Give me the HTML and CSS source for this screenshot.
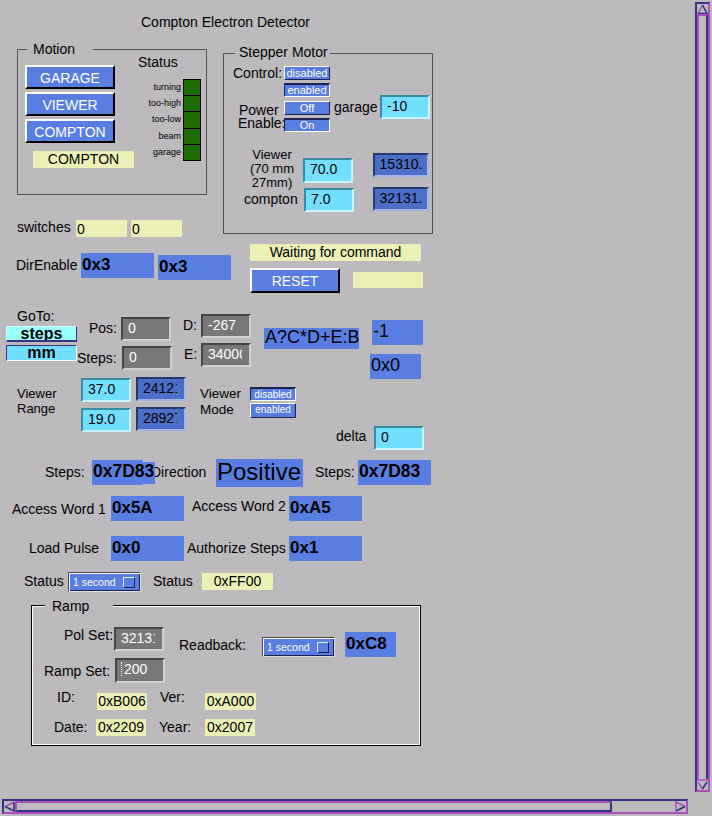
FILE: index.html
```html
<!DOCTYPE html>
<html>
<head>
<meta charset="utf-8">
<title>Compton Electron Detector</title>
<link rel="stylesheet" href="styles.css">
</head>
<body>
<div class="screen">

<div class="lbl at-title">Compton Electron Detector</div>

<!-- Motion -->
<div class="frame at-motion"></div>
<div class="legend at-motion-lg">Motion</div>
<div class="btn at-garage">GARAGE</div>
<div class="btn at-viewer">VIEWER</div>
<div class="btn at-compton">COMPTON</div>
<div class="ind at-pos-ind">COMPTON</div>
<div class="lbl at-status">Status</div>
<div class="ledlbl at-ledlbl">
	<div>turning</div>
	<div>too-high</div>
	<div>too-low</div>
	<div>beam</div>
	<div>garage</div>
</div>
<div class="leds at-leds">
	<div></div><div></div><div></div><div></div><div></div>
</div>

<!-- Stepper Motor -->
<div class="frame at-stepper"></div>
<div class="legend at-stepper-lg">Stepper Motor</div>
<div class="lbl at-control">Control:</div>
<div class="choice up at-ctl-dis">disabled</div>
<div class="choice down at-ctl-ena">enabled</div>
<div class="lbl two at-power"><span class="indent">Power</span><br>Enable:</div>
<div class="choice up at-pwr-off">Off</div>
<div class="choice down at-pwr-on">On</div>
<div class="lbl at-garage-lbl">garage</div>
<div class="entry cyan at-garage-set">-10</div>
<div class="small at-viewer-lbl">Viewer<br>(70 mm<br>27mm)</div>
<div class="entry cyan at-viewer-set">70.0</div>
<div class="lbl at-compton-lbl">compton</div>
<div class="entry cyan at-compton-set">7.0</div>
<div class="entry dark at-viewer-rb">15310.</div>
<div class="entry dark at-compton-rb">32131.</div>

<!-- switches / direction enable -->
<div class="lbl at-switches">switches</div>
<div class="ind left at-sw1">0</div>
<div class="ind left at-sw2">0</div>
<div class="lbl at-direnable">DirEnable</div>
<div class="hex at-dir1">0x3</div>
<div class="hex at-dir2">0x3</div>
<div class="ind at-waiting">Waiting for command</div>
<div class="btn at-reset">RESET</div>
<div class="ind at-msg"></div>

<!-- GoTo -->
<div class="lbl at-goto">GoTo:</div>
<div class="unit up-unit at-steps-btn">steps</div>
<div class="unit down-unit at-mm-btn">mm</div>
<div class="lbl at-pos-lbl">Pos:</div>
<div class="entry gray at-pos">0</div>
<div class="lbl at-steps-lbl">Steps:</div>
<div class="entry gray at-steps">0</div>
<div class="lbl at-d-lbl">D:</div>
<div class="entry gray at-d">-267</div>
<div class="lbl at-e-lbl">E:</div>
<div class="entry gray clip at-e"><span>34000</span></div>
<div class="val at-calc">A?C*D+E:B</div>
<div class="val at-minus1">-1</div>
<div class="val at-zero">0x0</div>

<!-- viewer range -->
<div class="small range at-range-lbl">Viewer<br>Range</div>
<div class="entry cyan at-range-hi">37.0</div>
<div class="entry dark clip at-range-hi-rb"><span>24121</span></div>
<div class="entry cyan at-range-lo">19.0</div>
<div class="entry dark clip at-range-lo-rb"><span>28927</span></div>
<div class="mode at-mode-lbl">Viewer<br>Mode</div>
<div class="choice down tiny at-mode-dis">disabled</div>
<div class="choice up tiny at-mode-ena">enabled</div>
<div class="lbl at-delta-lbl">delta</div>
<div class="entry cyan at-delta">0</div>

<!-- steps / direction -->
<div class="lbl at-steps1-lbl">Steps:</div>
<div class="lbl at-direction">Direction</div>
<div class="hex at-steps1-ext"></div>
<div class="hex wide at-steps1">0x7D83</div>
<div class="val big at-positive">Positive</div>
<div class="lbl at-steps2-lbl">Steps:</div>
<div class="hex wide at-steps2">0x7D83</div>

<div class="lbl at-aw1-lbl">Access Word 1</div>
<div class="hex at-aw1">0x5A</div>
<div class="lbl at-aw2-lbl">Access Word 2</div>
<div class="hex at-aw2">0xA5</div>

<div class="lbl at-load-lbl">Load Pulse</div>
<div class="hex at-load">0x0</div>
<div class="lbl at-auth-lbl">Authorize Steps</div>
<div class="hex at-auth">0x1</div>

<div class="lbl at-status1-lbl">Status</div>
<div class="menu at-status-menu">1 second<i></i></div>
<div class="lbl at-status2-lbl">Status</div>
<div class="ind at-status-val">0xFF00</div>

<!-- Ramp -->
<div class="frame etched at-ramp"></div>
<div class="legend at-ramp-lg">Ramp</div>
<div class="lbl at-polset-lbl">Pol Set:</div>
<div class="entry gray clip at-polset"><span>32131</span></div>
<div class="lbl at-rampset-lbl">Ramp Set:</div>
<div class="entry gray at-rampset"><span class="caret"></span>200</div>
<div class="lbl at-readback-lbl">Readback:</div>
<div class="menu at-readback-menu">1 second<i></i></div>
<div class="hex at-readback">0xC8</div>
<div class="lbl at-id-lbl">ID:</div>
<div class="ind at-id">0xB006</div>
<div class="lbl at-ver-lbl">Ver:</div>
<div class="ind at-ver">0xA000</div>
<div class="lbl at-date-lbl">Date:</div>
<div class="ind at-date">0x2209</div>
<div class="lbl at-year-lbl">Year:</div>
<div class="ind at-year">0x2007</div>

<!-- window scrollbars -->
<div class="vscroll">
	<div class="arrow"><svg width="11" height="10" viewBox="0 0 11 10"><path d="M1 9.5 L5.5 1" stroke="#ae4ebc" stroke-width="1.6" fill="none"/><path d="M5.5 1 L10 9.5 H1" stroke="#343386" stroke-width="1.6" fill="none"/></svg></div>
	<div class="thumb"></div>
	<div class="arrow"><svg width="11" height="11" viewBox="0 0 11 11"><path d="M0 1 H11 M1 3 L5.5 10" stroke="#ae4ebc" stroke-width="1.6" fill="none"/><path d="M5.5 10 L10 3" stroke="#343386" stroke-width="1.6" fill="none"/></svg></div>
</div>
<div class="hscroll">
	<div class="arrow"><svg width="11" height="11" viewBox="0 0 11 11"><path d="M10 1 L1 5.5" stroke="#ae4ebc" stroke-width="1.6" fill="none"/><path d="M1 5.5 L10 10 V1" stroke="#343386" stroke-width="1.6" fill="none"/></svg></div>
	<div class="thumb"></div>
	<div class="trough"></div>
	<div class="arrow"><svg width="11" height="11" viewBox="0 0 11 11"><path d="M1 10 V1 L10 5.5" stroke="#ae4ebc" stroke-width="1.6" fill="none"/><path d="M10 5.5 L1 10" stroke="#343386" stroke-width="1.6" fill="none"/></svg></div>
</div>

</div>
</body>
</html>
```

FILE: styles.css
```css
body {
	margin: 0;
	background-color: #bcbabd;
	font-family: "Liberation Sans", Arial, Helvetica, sans-serif;
	font-size: 14px;
	color: #000;
}

.screen {
	position: relative;
	width: 712px;
	height: 816px;
	overflow: hidden;
}

/* every widget sits at its own spot on the display canvas */
.screen > div {
	position: absolute;
	box-sizing: border-box;
	white-space: nowrap;
}

/* text */
.lbl { line-height: 14px; }
.lbl.two { line-height: 13px; }
.indent { padding-left: 1px; }
.small { font-size: 13px; line-height: 14px; }
.small.range { line-height: 15px; }
.mode { font-size: 13.5px; line-height: 16px; }
.legend {
	background-color: #bcbabd;
	line-height: 14px;
}

/* frames */
.frame { border: 1px solid #4f4f4f; }
.frame.etched {
	border-color: #000;
	box-shadow: inset 0 0 0 1px #fff;
}

/* yellow text indicators */
.ind {
	background-color: #ebf1b5;
	line-height: 17px;
	text-align: center;
	overflow: hidden;
}
.ind.left {
	text-align: left;
	padding-left: 1px;
	line-height: 18px;
}

/* blue text updates */
.hex {
	background-color: #597ee1;
	font-size: 17px;
	font-weight: bold;
	line-height: 23px;
	padding-left: 1px;
}
.hex.wide { font-size: 17.5px; }
.val {
	background-color: #597ee1;
	font-size: 18px;
	line-height: 22px;
	padding-left: 1px;
}
.val.big {
	font-size: 24px;
	line-height: 26px;
}

/* entries */
.entry {
	border: 2px solid;
	line-height: 19px;
	padding-left: 5px;
	overflow: hidden;
}
.cyan {
	background-color: #73dfff;
	border-color: #3a8aa1 #c8f6ff #c8f6ff #3a8aa1;
}
.gray {
	background-color: #787878;
	color: #fff;
	border-color: #454545 #d0d0d0 #d0d0d0 #454545;
}
.dark {
	background-color: #4b6ec7;
	border-color: #283a6e #a2b4ea #a2b4ea #283a6e;
	text-align: center;
	padding-left: 0;
}
.dark.clip {
	text-align: left;
	padding-left: 5px;
}
.clip span {
	display: block;
	width: 34px;
	overflow: hidden;
}
.caret {
	display: inline-block;
	width: 0;
	height: 14px;
	border-left: 1px dotted #fff;
	margin-right: 2px;
	vertical-align: -2px;
}

/* buttons */
.btn {
	background-color: #597ee1;
	color: #fff;
	border: 2px solid;
	border-color: #fff #000 #000 #fff;
	text-align: center;
	line-height: 22px;
}
.choice {
	background-color: #597ee1;
	color: #fff;
	font-size: 11px;
	line-height: 12px;
	text-align: center;
	border: 1px solid;
}
.choice.tiny { font-size: 10px; }
.up { border-color: #fff #1c2150 #1c2150 #fff; }
.down {
	border-color: #1c2150 #fff #fff #1c2150;
	border-top-width: 2px;
	line-height: 11px;
}
.unit {
	font-size: 16px;
	font-weight: bold;
	line-height: 13px;
	text-align: center;
	overflow: hidden;
	border: 1px solid;
}
.up-unit {
	background-color: #99ffff;
	border-color: #d8ffff #343386 #343386 #d8ffff;
	border-bottom-width: 2px;
}
.down-unit {
	background-color: #73dfff;
	border-color: #343386 #fff #fff #343386;
}
.menu {
	display: flex;
	align-items: center;
	background-color: #597ee1;
	color: #fff;
	font-size: 10.5px;
	padding-left: 4px;
	border: 1px solid;
	border-color: #4a4a4a #e0e0e0 #e0e0e0 #4a4a4a;
	box-shadow: inset 1px 1px 0 #fff, inset -1px -1px 0 #1c2150;
}
.menu i {
	box-sizing: border-box;
	width: 12px;
	height: 11px;
	margin-left: 7px;
	border: 1px solid;
	border-color: #e8ecff #1c2150 #1c2150 #e8ecff;
}

/* status leds */
.ledlbl {
	font-size: 9px;
	text-align: right;
}
.ledlbl div {
	height: 16.2px;
	line-height: 16px;
}
.leds {
	display: flex;
	flex-direction: column;
	border: 1px solid #000;
}
.leds div {
	flex: 1;
	background-color: #216c00;
	border-top: 1px solid #000;
}
.leds div:first-child { border-top: 0; }

/* scrollbars */
.vscroll, .hscroll {
	display: flex;
	border: 2px solid;
	border-color: #343386 #ae4ebc #ae4ebc #343386;
}
.vscroll {
	left: 695px;
	top: 2px;
	width: 15px;
	height: 790px;
	flex-direction: column;
}
.hscroll {
	left: 2px;
	top: 799px;
	width: 686px;
	height: 15px;
}
.arrow { display: flex; }
.vscroll .thumb {
	flex: 1;
	border: 2px solid;
	border-color: #ae4ebc #343386 #343386 #ae4ebc;
	border-bottom: 0;
}
.hscroll .thumb {
	width: 593px;
	border: 2px solid;
	border-color: #ae4ebc #343386 #343386 #ae4ebc;
}
.trough { flex: 1; }

/* positions */
.at-title { left: 141px; top: 15px; }

.at-motion { left: 17px; top: 49px; width: 190px; height: 146px; }
.at-motion-lg { left: 27px; top: 42px; width: 66px; padding-left: 6px; }
.at-garage { left: 25px; top: 65px; width: 90px; height: 24px; }
.at-viewer { left: 25px; top: 92px; width: 90px; height: 24px; }
.at-compton { left: 25px; top: 119px; width: 90px; height: 24px; }
.at-pos-ind { left: 33px; top: 151px; width: 101px; height: 17px; }
.at-status { left: 138px; top: 55px; }
.at-ledlbl { left: 120px; top: 79px; width: 61px; }
.at-leds { left: 183px; top: 79px; width: 18px; height: 82px; }

.at-stepper { left: 223px; top: 53px; width: 210px; height: 181px; }
.at-stepper-lg { left: 235px; top: 45px; width: 95px; padding-left: 4px; }
.at-control { left: 233px; top: 66px; }
.at-ctl-dis { left: 284px; top: 66px; width: 46px; height: 14px; }
.at-ctl-ena { left: 284px; top: 83px; width: 46px; height: 14px; }
.at-power { left: 238px; top: 104px; }
.at-pwr-off { left: 284px; top: 101px; width: 46px; height: 14px; }
.at-pwr-on { left: 284px; top: 118px; width: 46px; height: 14px; }
.at-garage-lbl { left: 334px; top: 100px; }
.at-garage-set { left: 380px; top: 95px; width: 50px; height: 24px; }
.at-viewer-lbl { left: 247px; top: 148px; width: 50px; text-align: center; }
.at-viewer-set { left: 303px; top: 158px; width: 50px; height: 25px; }
.at-compton-lbl { left: 244px; top: 192px; }
.at-compton-set { left: 304px; top: 188px; width: 50px; height: 24px; }
.at-viewer-rb { left: 373px; top: 153px; width: 56px; height: 24px; }
.at-compton-rb { left: 373px; top: 187px; width: 56px; height: 24px; }

.at-switches { left: 17px; top: 220px; }
.at-sw1 { left: 76px; top: 220px; width: 51px; height: 17px; }
.at-sw2 { left: 131px; top: 220px; width: 51px; height: 17px; }
.at-direnable { left: 16px; top: 258px; }
.at-dir1 { left: 81px; top: 253px; width: 73px; height: 25px; }
.at-dir2 { left: 158px; top: 255px; width: 73px; height: 25px; }
.at-waiting { left: 250px; top: 244px; width: 171px; height: 17px; }
.at-reset { left: 250px; top: 268px; width: 90px; height: 25px; }
.at-msg { left: 353px; top: 272px; width: 70px; height: 16px; }

.at-goto { left: 17px; top: 309px; }
.at-steps-btn { left: 6px; top: 326px; width: 71px; height: 16px; }
.at-mm-btn { left: 6px; top: 345px; width: 71px; height: 16px; }
.at-pos-lbl { left: 89px; top: 321px; }
.at-pos { left: 121px; top: 317px; width: 50px; height: 24px; }
.at-steps-lbl { left: 77px; top: 351px; }
.at-steps { left: 122px; top: 346px; width: 50px; height: 24px; }
.at-d-lbl { left: 183px; top: 318px; }
.at-d { left: 201px; top: 314px; width: 50px; height: 24px; }
.at-e-lbl { left: 184px; top: 347px; }
.at-e { left: 201px; top: 343px; width: 50px; height: 24px; }
.at-calc { left: 264px; top: 328px; width: 95px; height: 21px; line-height: 18px; }
.at-minus1 { left: 372px; top: 320px; width: 51px; height: 25px; }
.at-zero { left: 370px; top: 354px; width: 51px; height: 25px; }

.at-range-lbl { left: 17px; top: 386px; }
.at-range-hi { left: 81px; top: 378px; width: 50px; height: 24px; }
.at-range-hi-rb { left: 136px; top: 377px; width: 50px; height: 24px; }
.at-range-lo { left: 81px; top: 408px; width: 50px; height: 24px; }
.at-range-lo-rb { left: 136px; top: 407px; width: 50px; height: 24px; }
.at-mode-lbl { left: 200px; top: 386px; }
.at-mode-dis { left: 250px; top: 387px; width: 46px; height: 14px; }
.at-mode-ena { left: 250px; top: 403px; width: 46px; height: 15px; }
.at-delta-lbl { left: 336px; top: 429px; }
.at-delta { left: 374px; top: 426px; width: 50px; height: 24px; }

.at-steps1-lbl { left: 45px; top: 465px; }
.at-direction { left: 151px; top: 465px; }
.at-steps1-ext { left: 143px; top: 462px; width: 12px; height: 22px; }
.at-steps1 { left: 92px; top: 460px; width: 51px; height: 25px; }
.at-positive { left: 216px; top: 459px; width: 87px; height: 28px; }
.at-steps2-lbl { left: 315px; top: 465px; }
.at-steps2 { left: 358px; top: 460px; width: 73px; height: 25px; }

.at-aw1-lbl { left: 12px; top: 502px; }
.at-aw1 { left: 111px; top: 496px; width: 73px; height: 25px; }
.at-aw2-lbl { left: 192px; top: 499px; }
.at-aw2 { left: 289px; top: 496px; width: 73px; height: 25px; }
.at-load-lbl { left: 29px; top: 541px; }
.at-load { left: 111px; top: 536px; width: 73px; height: 25px; }
.at-auth-lbl { left: 187px; top: 541px; }
.at-auth { left: 289px; top: 536px; width: 73px; height: 25px; }
.at-status1-lbl { left: 24px; top: 574px; }
.at-status-menu { left: 68px; top: 572px; width: 73px; height: 20px; }
.at-status2-lbl { left: 153px; top: 574px; }
.at-status-val { left: 202px; top: 573px; width: 71px; height: 17px; }

.at-ramp { left: 31px; top: 605px; width: 390px; height: 141px; }
.at-ramp-lg { left: 45px; top: 599px; width: 68px; padding-left: 7px; }
.at-polset-lbl { left: 64px; top: 628px; }
.at-polset { left: 114px; top: 627px; width: 50px; height: 24px; }
.at-rampset-lbl { left: 44px; top: 664px; }
.at-rampset { left: 115px; top: 658px; width: 50px; height: 25px; padding-left: 4px; }
.at-readback-lbl { left: 179px; top: 638px; }
.at-readback-menu { left: 262px; top: 637px; width: 73px; height: 20px; }
.at-readback { left: 345px; top: 632px; width: 51px; height: 25px; }
.at-id-lbl { left: 57px; top: 690px; }
.at-id { left: 97px; top: 693px; width: 50px; height: 17px; }
.at-ver-lbl { left: 160px; top: 690px; }
.at-ver { left: 205px; top: 693px; width: 51px; height: 17px; }
.at-date-lbl { left: 54px; top: 720px; }
.at-date { left: 96px; top: 719px; width: 50px; height: 17px; }
.at-year-lbl { left: 159px; top: 720px; }
.at-year { left: 205px; top: 719px; width: 50px; height: 17px; }
```
